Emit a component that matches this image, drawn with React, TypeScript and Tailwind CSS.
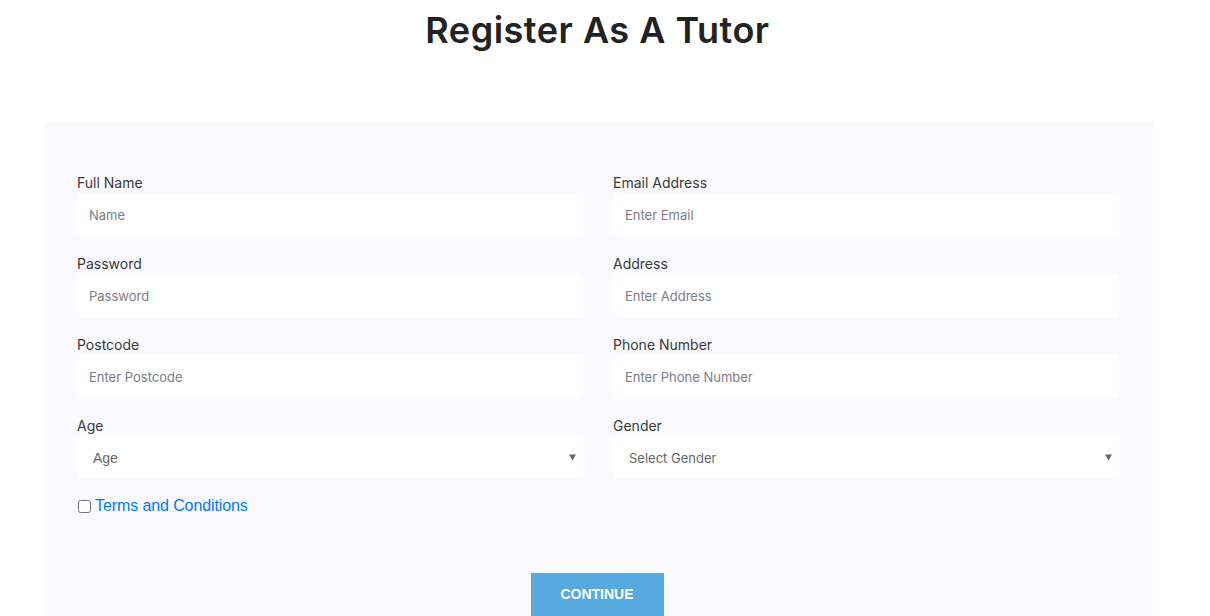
import React from "react";

const font = { fontFamily: "Poppins, 'Inter', 'Open Sans', sans-serif" };

function Field({ label, placeholder }: { label: string; placeholder: string }) {
  return (
    <div className="flex flex-col">
      <label className="text-[14px] leading-[21px] text-[#3a3a3a] font-['Inter',sans-serif]">{label}</label>
      <input
        className="h-[43px] w-full bg-white px-[12px] text-[13px] text-[#444] placeholder:text-[#7d7d88] outline-none font-['Inter',sans-serif]"
        placeholder={placeholder}
      />
    </div>
  );
}

function SelectField({ label, value, arial }: { label: string; value: string; arial?: boolean }) {
  return (
    <div className="flex flex-col">
      <label className="text-[14px] leading-[21px] text-[#3a3a3a] font-['Inter',sans-serif]">{label}</label>
      <div className="relative h-[43px] w-full bg-white">
        <select
          className={
            "h-full w-full appearance-none bg-transparent pl-[16px] pt-[2px] text-[13px] text-[#666] outline-none " +
            (arial ? "font-['Liberation_Sans',sans-serif] text-[14px]" : "font-['Inter',sans-serif]")
          }
          defaultValue=""
        >
          <option value="">{value}</option>
        </select>
        <svg className="pointer-events-none absolute right-[7px] top-[18px]" width="7" height="7" viewBox="0 0 7 7">
          <path d="M0 0.5 L7 0.5 L3.5 6.5 Z" fill="#666" />
        </svg>
      </div>
    </div>
  );
}

export default function App() {
  return (
    <div className="min-h-[616px] w-[1210px] bg-white" style={font}>
      <div className="w-[1195px]">
        <h1 className="pt-[8px] text-center text-[36px] leading-[44px] font-semibold tracking-[0.5px] text-[#222222] font-['Inter',sans-serif]">
          Register As A Tutor
        </h1>
        <div className="mx-[43px] mt-[70px] w-[1110px] bg-[#f9f9fe] px-[34px] pt-[50px]">
          <div className="grid grid-cols-2 gap-x-[30px] gap-y-[17px]">
            <Field label="Full Name" placeholder="Name" />
            <Field label="Email Address" placeholder="Enter Email" />
            <Field label="Password" placeholder="Password" />
            <Field label="Address" placeholder="Enter Address" />
            <Field label="Postcode" placeholder="Enter Postcode" />
            <Field label="Phone Number" placeholder="Enter Phone Number" />
            <SelectField label="Age" value="Age" arial />
            <SelectField label="Gender" value="Select Gender" />
          </div>
          <div className="mt-[16px] flex items-center gap-[4px] pl-[1px]">
            <input type="checkbox" className="m-0 h-[13px] w-[13px]" />
            <a href="#" className="text-[16px] leading-[22px] tracking-[-0.1px] text-[#007bff] font-['Liberation_Sans',sans-serif]">
              Terms and Conditions
            </a>
          </div>
          <div className="mt-[56px] flex justify-center pb-[20px]">
            <button className="h-[43px] w-[133px] -translate-x-[1px] bg-[#56aadf] text-[14px] font-bold text-white font-['Liberation_Sans',sans-serif]">
              CONTINUE
            </button>
          </div>
        </div>
      </div>
    </div>
  );
}
